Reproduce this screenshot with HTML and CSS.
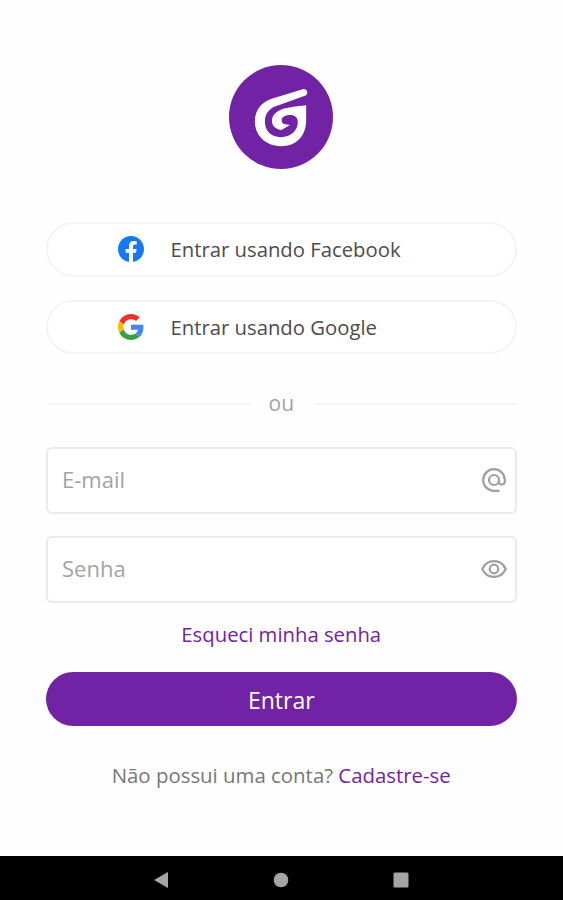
FILE: index.html
```html
<!DOCTYPE html>
<html lang="pt-BR">
<head>
  <meta charset="UTF-8">
  <title>Entrar</title>
  <link rel="stylesheet" href="styles.css">
</head>
<body>

  <main class="login">
    <svg class="logo" viewBox="0 0 310 310">
      <circle cx="155" cy="155" r="155" fill="#7122a5"/>
      <path fill="#fff" d="M220 72 C232 69 239 85 228 91 L154 118 C122 126 107 143 107 168 C107 198 127 215 154 215 C185 215 205 196 205 170 C205 156 196 149 182 149 C170 149 161 153 158 159 C156 166 158 173 163 176 L182 179 L156 194 C141 192 128 183 128 167 C128 148 143 135 168 129 C182 126 196 123 230 120 L230 164 C230 213 200 242 155 242 C108 242 77 209 77 168 C77 132 98 109 134 98 Z"/>
    </svg>

    <button class="social" type="button">
      <svg viewBox="0 0 24 24">
        <path fill="#1877f2" d="M24 12.07C24 5.4 18.63 0 12 0S0 5.4 0 12.07C0 18.1 4.39 23.1 10.13 24v-8.44H7.08v-3.49h3.05V9.41c0-3.02 1.79-4.69 4.53-4.69 1.31 0 2.68.24 2.68.24v2.97h-1.51c-1.49 0-1.96.93-1.96 1.89v2.25h3.33l-.53 3.49h-2.8V24C19.61 23.1 24 18.1 24 12.07z"/>
      </svg>
      <span>Entrar usando Facebook</span>
    </button>

    <button class="social google" type="button">
      <svg viewBox="0 0 48 48">
        <path fill="#ea3526" d="M24 9.5c3.54 0 6.71 1.22 9.21 3.6l6.85-6.85C35.9 2.38 30.47 0 24 0 14.62 0 6.51 5.38 2.56 13.22l7.98 6.19C12.43 13.72 17.74 9.5 24 9.5z"/>
        <path fill="#4285f4" d="M46.98 24.55c0-1.57-.15-3.09-.38-4.55H24v9.02h12.94c-.58 2.96-2.26 5.48-4.78 7.18l7.73 6c4.51-4.18 7.09-10.36 7.09-17.65z"/>
        <path fill="#fbbc05" d="M10.53 28.59c-.48-1.45-.76-2.99-.76-4.59s.27-3.14.76-4.59l-7.98-6.19C.92 16.46 0 20.12 0 24s.92 7.54 2.56 10.78l7.97-6.19z"/>
        <path fill="#34a142" d="M24 48c6.48 0 11.93-2.13 15.89-5.81l-7.73-6c-2.15 1.45-4.92 2.3-8.16 2.3-6.26 0-11.57-4.22-13.47-9.91l-7.98 6.19C6.51 42.62 14.62 48 24 48z"/>
      </svg>
      <span>Entrar usando Google</span>
    </button>

    <div class="divider"><span>ou</span></div>

    <div class="field">
      <input type="text" placeholder="E-mail">
      <svg viewBox="0 0 26 26">
        <path d="M18.5 23.8 H13 A10.8 10.8 0 1 1 23.8 13 V14.5 A3 3 0 0 1 18 15.6 V13 M18 13 A5 5 0 1 1 8 13 A5 5 0 1 1 18 13"/>
      </svg>
    </div>

    <div class="field">
      <input type="password" placeholder="Senha">
      <svg viewBox="0 0 26 26">
        <path d="M1.3 13 C6 2.5 20 2.5 24.7 13 C20 23.5 6 23.5 1.3 13 Z"/>
        <circle cx="13" cy="13" r="4.3"/>
      </svg>
    </div>

    <a class="forgot" href="#">Esqueci minha senha</a>
    <button class="submit" type="button">Entrar</button>
    <p class="signup">Não possui uma conta? <a href="#">Cadastre-se</a></p>
  </main>

  <nav class="navbar">
    <svg viewBox="0 0 16 16"><path d="M1 8 L15 0 V16 Z"/></svg>
    <svg viewBox="0 0 16 16"><circle cx="8" cy="8" r="7.3"/></svg>
    <svg viewBox="0 0 16 16"><rect x="0.5" y="0.5" width="15" height="15" rx="1.5"/></svg>
  </nav>

</body>
</html>
```
FILE: styles.css
```css
* {
  box-sizing: border-box;
}

body {
  font-family: "Open Sans", sans-serif;
  font-size: 20.3px;
  background-color: #fefefe;
  margin: 0;
  height: 900px;
  display: flex;
  flex-direction: column;
}

button,
input {
  font-family: inherit;
  font-size: inherit;
}

a {
  color: #7122a5;
  text-decoration: none;
}

.login {
  flex: 1;
  display: flex;
  flex-direction: column;
  padding: 65px 46.5px 0 46px;
}

.logo {
  width: 104px;
  height: 104px;
  align-self: center;
  margin-bottom: 53px;
}

.social {
  display: flex;
  align-items: center;
  gap: 26.5px;
  height: 55px;
  margin-bottom: 23px;
  padding: 0 0 1px 70px;
  border: 2px solid #f4f4f4;
  border-radius: 28px;
  background-color: #fff;
  color: #4c4c4c;
}

.social svg {
  width: 26px;
  height: 26px;
}

.google {
  height: 54px;
  margin-bottom: 36px;
  padding-bottom: 0;
}

.divider {
  display: flex;
  align-items: center;
  gap: 20px;
  height: 27px;
  margin: 0 0 30px 2px;
  color: #a3a3a3;
}

.divider span {
  margin: -2px 0 0 -2px;
  font-size: 21px;
}

.divider::before,
.divider::after {
  content: "";
  flex: 1;
  height: 2px;
  background-color: #f5f5f5;
}

.field {
  display: flex;
  align-items: center;
  height: 67px;
  margin-bottom: 22px;
  padding: 0 8px 2px 14px;
  border: 2px solid #ebebeb;
  border-radius: 6px;
  background-color: #fff;
}

.field input {
  flex: 1;
  min-width: 0;
  padding: 0 0 1px;
  border: none;
  outline: none;
  background: none;
  font-size: 22px;
}

.field input::placeholder {
  color: #a3a3a3;
}

.field svg {
  width: 26px;
  height: 26px;
  fill: none;
  stroke: #a0a0a0;
  stroke-width: 2.2;
}

.forgot {
  align-self: center;
  line-height: 28px;
  margin-top: -5px;
}

.submit {
  height: 54px;
  margin-top: 24px;
  padding-top: 2px;
  border: none;
  border-radius: 27px;
  background-color: #7122a5;
  color: #fff;
  font-size: 23px;
  font-weight: 500;
}

.signup {
  margin: 35px -4px 0;
  line-height: 28px;
  text-align: center;
  font-size: 20.4px;
  color: #777;
}

.navbar {
  display: flex;
  justify-content: center;
  align-items: center;
  gap: 104px;
  height: 44px;
  padding: 3px 1px 0 0;
  background-color: #000;
}

.navbar svg {
  width: 16px;
  height: 16px;
  fill: #a5a5a5;
}
```
